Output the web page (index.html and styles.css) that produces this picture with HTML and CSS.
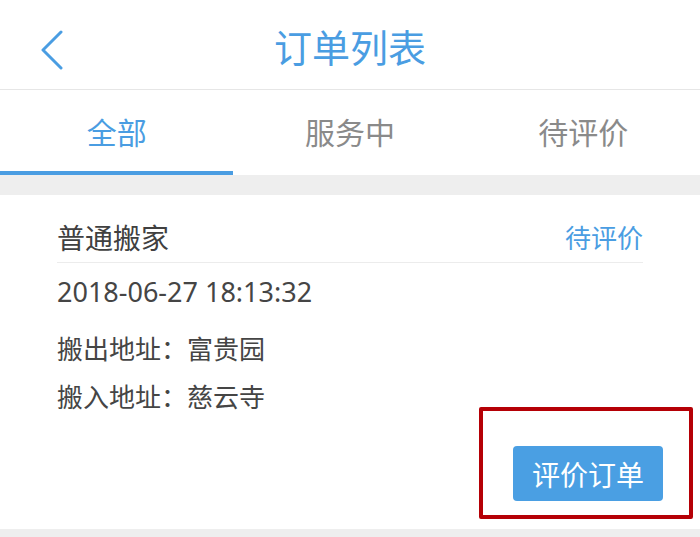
FILE: index.html
```html
<!DOCTYPE html>
<html lang="zh-CN">
<head>
<meta charset="utf-8">
<link rel="stylesheet" href="styles.css">
</head>
<body>
<div class="page">
  <header class="topbar">
    <span class="back">
      <svg width="24" height="40" viewBox="0 0 24 40"><path d="M21 2 L3 20 L21 38" fill="none" stroke="#4a9de2" stroke-width="3" stroke-linecap="round" stroke-linejoin="round"/></svg>
    </span>
    <h1 class="title">订单列表</h1>
  </header>
  <nav class="tabs">
    <div class="tab active">全部</div>
    <div class="tab">服务中</div>
    <div class="tab">待评价</div>
  </nav>
  <div class="gap"></div>
  <section class="card">
    <div class="card-head">
      <span class="kind">普通搬家</span>
      <span class="status">待评价</span>
    </div>
    <div class="date">2018-06-27 18:13:32</div>
    <div class="addr addr-out">搬出地址：富贵园</div>
    <div class="addr addr-in">搬入地址：慈云寺</div>
    <div class="actions">
      <button class="btn">评价订单</button>
      <span class="mark"></span>
    </div>
  </section>
  <div class="gap-bottom"></div>
</div>
</body>
</html>
```
FILE: styles.css
```css
* { box-sizing: border-box; }
html, body { margin: 0; padding: 0; }
body {
  width: 700px;
  height: 537px;
  overflow: hidden;
  background: #fff;
  font-family: "Noto Sans CJK SC", "Noto Sans", sans-serif;
}
.page { display: flex; flex-direction: column; }
.topbar {
  height: 90px;
  border-bottom: 1px solid #e6e6e6;
  display: flex;
  align-items: center;
  justify-content: center;
  position: relative;
}
.back {
  position: absolute;
  left: 40px;
  top: 30px;
  display: block;
  line-height: 0;
}
.title {
  margin: 0;
  font-size: 38px;
  font-weight: 400;
  color: #4a9de2;
  line-height: 1;
  padding-top: 2px;
}
.tabs {
  height: 85px;
  display: flex;
}
.tab {
  flex: 1;
  display: flex;
  align-items: center;
  justify-content: center;
  font-size: 30px;
  color: #8a8a8a;
  border-bottom: 4px solid transparent;
  padding-top: 0;
}
.tab.active {
  color: #4a9de2;
  border-bottom-color: #4a9de2;
}
.gap { height: 20px; background: #eeeeee; }
.card {
  padding: 0 57px;
  display: flex;
  flex-direction: column;
  height: 334px;
}
.card-head {
  height: 68px;
  display: flex;
  align-items: center;
  justify-content: space-between;
  border-bottom: 1px solid #ececec;
  padding-top: 16px;
}
.kind { font-size: 28px; color: #404040; }
.status { font-size: 26px; color: #4a9de2; }
.date {
  font-size: 27px;
  color: #454545;
  margin-top: 12px;
  line-height: 34px;
  font-family: "Noto Sans", "Noto Sans CJK SC", sans-serif;
}
.addr {
  font-size: 26px;
  color: #454545;
  line-height: 36px;
}
.addr-out { margin-top: 21px; }
.addr-in { margin-top: 12px; }
.actions {
  display: flex;
  justify-content: flex-end;
  margin-top: 32px;
  margin-right: -20px;
  position: relative;
}
.btn {
  width: 150px;
  height: 55px;
  border: none;
  border-radius: 4px;
  background: #4a9fe3;
  color: #fff;
  font-family: "Noto Sans CJK SC", sans-serif;
  font-size: 28px;
  padding: 0;
}
.mark {
  position: absolute;
  right: -30px;
  top: -39px;
  width: 214px;
  height: 112px;
  border: 4px solid #b50006;
  border-radius: 2px;
}
.gap-bottom { height: 8px; background: #eeeeee; }
```
